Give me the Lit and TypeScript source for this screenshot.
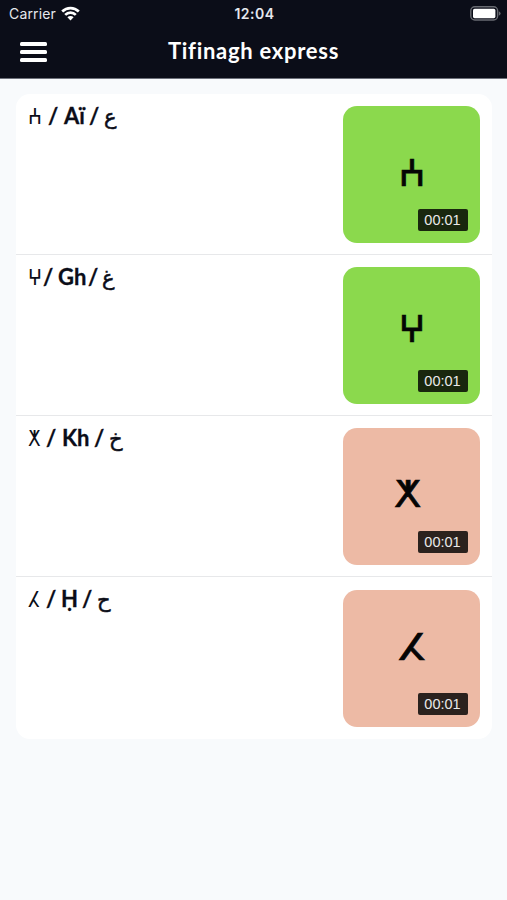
import { LitElement, html, css } from "lit";
import { customElement, property } from "lit/decorators.js";
import { styleMap } from "lit/directives/style-map.js";

interface Token {
  text: string;
  kind: "tif" | "slash" | "latin" | "arabic";
  width: number;
}

interface Lesson {
  tokens: Token[];
  letter: string;
  tone: "green" | "peach";
  dx: number;
  dy: number;
  stretch: number;
}

const t = (kind: Token["kind"], text: string, width: number): Token => ({ kind, text, width });

const lessons: Lesson[] = [
  { tokens: [t("tif", "ⵄ", 19), t("slash", "/", 16), t("latin", "Aï", 25), t("slash", "/", 15), t("arabic", "ع", 16)], letter: "ⵄ", tone: "green", dx: 0, dy: -1, stretch: 0.97 },
  { tokens: [t("tif", "ⵖ", 14), t("slash", "/", 15), t("latin", "Gh", 30), t("slash", "/", 14), t("arabic", "غ", 16)], letter: "ⵖ", tone: "green", dx: 0, dy: -6, stretch: 0.95 },
  { tokens: [t("tif", "ⵅ", 17), t("slash", "/", 16), t("latin", "Kh", 32), t("slash", "/", 15), t("arabic", "خ", 16)], letter: "ⵅ", tone: "peach", dx: -4, dy: -2, stretch: 1.08 },
  { tokens: [t("tif", "ⵃ", 17), t("slash", "/", 15), t("latin", "Ḥ", 21), t("slash", "/", 15), t("arabic", "ح", 16)], letter: "ⵃ", tone: "peach", dx: 0, dy: -10, stretch: 1.16 },
];

@customElement("status-bar")
class StatusBar extends LitElement {
  static styles = css`
    :host {
      display: grid;
      grid-template-columns: 1fr auto 1fr;
      align-items: center;
      height: 27px;
      padding: 0 6px 0 9px;
      color: #e6e8ed;
      font: 14px/20px Inter, sans-serif;
    }
    .carrier { display: flex; align-items: center; gap: 5px; letter-spacing: 0.15px; }
    .time { font-weight: 600; font-size: 14px; letter-spacing: 0.5px; margin-right: 1px; }
    .battery { justify-self: end; display: block; }
    svg { display: block; margin-top: -1px; }
  `;
  render() {
    return html`
      <div class="carrier">
        <span>Carrier</span>
        <svg width="19" height="15" viewBox="0 0 19 15" fill="none" stroke="#fff" stroke-width="2.7">
          <path d="M1.2 5.5a11.8 11.8 0 0 1 16.6 0" />
          <path d="M4.2 8.9a7.5 7.5 0 0 1 10.6 0" />
          <path d="M9.5 14.4 6.4 11.3a4.4 4.4 0 0 1 6.2 0Z" fill="#fff" stroke="none" />
        </svg>
      </div>
      <div class="time">12:04</div>
      <svg class="battery" width="31" height="15" viewBox="0 0 31 15">
        <rect x="0.8" y="0.8" width="26.8" height="13.2" rx="4" fill="none" stroke="#686a71" stroke-width="1.4" />
        <rect x="3" y="2.8" width="22.4" height="9.4" rx="1.6" fill="#fff" />
        <path d="M28.8 5.2q1.8.7 1.8 2.3t-1.8 2.3Z" fill="#686a71" />
      </svg>
    `;
  }
}

@customElement("nav-bar")
class NavBar extends LitElement {
  static styles = css`
    :host {
      display: grid;
      grid-template-columns: 1fr auto 1fr;
      align-items: center;
      height: 51px;
      padding: 0 20px;
      color: #fff;
    }
    .menu { display: grid; gap: 4.5px; width: 27px; margin-top: -1px; }
    .bar { height: 3.5px; border-radius: 1.5px; background: #fff; }
    .title {
      font: 700 22px/30px Lato, sans-serif;
      letter-spacing: 0.72px;
      font-variant-ligatures: none;
      margin-top: -4px;
      white-space: nowrap;
    }
  `;
  render() {
    return html`
      <div class="menu"><span class="bar"></span><span class="bar"></span><span class="bar"></span></div>
      <div class="title">Tifinagh express</div>
    `;
  }
}

@customElement("lesson-row")
class LessonRow extends LitElement {
  @property({ attribute: false }) lesson!: Lesson;
  static styles = css`
    :host {
      display: flex;
      justify-content: space-between;
      box-sizing: border-box;
      height: 161.2px;
      padding: 12px 12px 0 13px;
    }
    .heading {
      display: flex;
      align-items: baseline;
      height: 24px;
      margin-top: -2.5px;
      color: #0b0d18;
      font: 700 22px/24px Lato, "Noto Sans", sans-serif;
    }
    .token { display: block; white-space: nowrap; }
    .slash, .latin { -webkit-text-stroke: 0.3px #0b0d18; }
    .tif {
      font: 400 18.5px/24px "DejaVu Sans", sans-serif;
      transform: translateX(-1px) scaleY(1.16);
      transform-origin: 50% 19px;
    }
    .arabic {
      font: 400 21px/24px "DejaVu Sans", sans-serif;
      -webkit-text-stroke: 0.5px #0b0d18;
    }
    .thumb {
      display: grid;
      grid-template: 1fr / 1fr;
      place-items: center;
      width: 137px;
      height: 137px;
      border-radius: 14px;
    }
    .green { background: #8bd94d; }
    .peach { background: #edbaa5; }
    .letter {
      grid-area: 1 / 1;
      color: #050505;
      font: 400 37px/40px "DejaVu Sans", sans-serif;
      -webkit-text-stroke: 0.7px #050505;
    }
    .time {
      grid-area: 1 / 1;
      place-self: end;
      margin: 0 12px 12px 0;
      width: 50px;
      height: 22px;
      border-radius: 2px;
      background: rgba(0, 0, 0, 0.82);
      color: #e9e9e9;
      font: 14.5px/23px "Liberation Sans", sans-serif;
      text-align: center;
      text-indent: -1px;
    }
  `;
  render() {
    const l = this.lesson;
    return html`
      <div class="heading">
        ${l.tokens.map((k) => html`<span class="token ${k.kind}" style=${styleMap({ width: `${k.width}px` })}>${k.text}</span>`)}
      </div>
      <div class="thumb ${l.tone}">
        <span class="letter" style=${styleMap({ transform: `translate(${l.dx}px, ${l.dy}px) scaleX(${l.stretch})` })}>${l.letter}</span>
        <span class="time">00:01</span>
      </div>
    `;
  }
}

@customElement("app-root")
class AppRoot extends LitElement {
  static styles = css`
    :host { display: block; min-height: 900px; background: #f8fafc; }
    .top { background: #0b0d18; border-bottom: 1px solid #6d707a; }
    .card {
      margin: 15px 15px 0 16px;
      border-radius: 14px;
      background: #fff;
      overflow: hidden;
    }
    .row:not(:last-child) {
      background: linear-gradient(#e7e8ea, #e7e8ea) 0 159.6px / 100% 1.4px no-repeat;
    }
  `;
  render() {
    return html`
      <header class="top"><status-bar></status-bar><nav-bar></nav-bar></header>
      <main class="card">
        ${lessons.map((l) => html`<lesson-row class="row" .lesson=${l}></lesson-row>`)}
      </main>
    `;
  }
}
